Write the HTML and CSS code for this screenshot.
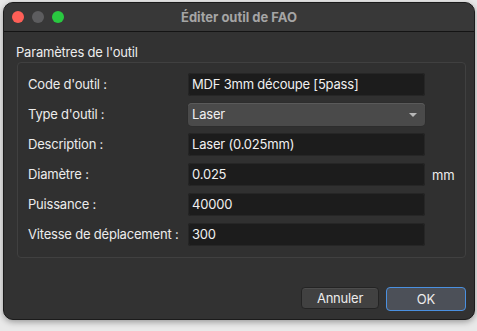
FILE: index.html
```html
<!DOCTYPE html>
<html lang="fr">
<head>
  <meta charset="UTF-8" />
  <title>Éditer outil de FAO</title>
  <link rel="stylesheet" href="styles.css">
</head>
<body>

  <div class="window">
    <div class="titlebar">
      <div class="lights">
        <span class="light red"></span>
        <span class="light grey"></span>
        <span class="light green"></span>
      </div>
      <div class="title">Éditer outil de FAO</div>
    </div>

    <div class="body">
      <div class="group-title">Paramètres de l'outil</div>
      <div class="group">
        <div class="form">
          <label>Code d'outil :</label>
          <div class="field">MDF 3mm découpe [5pass]</div>
          <span></span>

          <label>Type d'outil :</label>
          <div class="select">Laser <span class="arrow"></span></div>
          <span></span>

          <label>Description :</label>
          <div class="field">Laser (0.025mm)</div>
          <span></span>

          <label>Diamètre :</label>
          <div class="field">0.025</div>
          <span class="unit">mm</span>

          <label>Puissance :</label>
          <div class="field">40000</div>
          <span></span>

          <label>Vitesse de déplacement :</label>
          <div class="field">300</div>
          <span></span>
        </div>
      </div>

      <div class="buttons">
        <button class="btn">Annuler</button>
        <button class="btn default">OK</button>
      </div>
    </div>
  </div>

</body>
</html>
```

FILE: styles.css
```css
body {
  margin: 0;
  width: 477px;
  height: 331px;
  font-family: Inter, "Noto Sans", sans-serif;
  font-size: 13px;
  letter-spacing: -0.2px;
  color: #ececec;
  background-color: #e9e9e9;
  background-image:
    radial-gradient(circle, #c4c4c4 0.8px, transparent 1px);
  background-size: 30px 30px;
  overflow: hidden;
}

.window {
  margin: 2px 0 0 3px;
  width: 470px;
  height: 316px;
  border: 1px solid #1b1b1b;
  border-radius: 10px;
  background-color: #323232;
  box-shadow: 0 2px 6px rgba(0,0,0,0.35);
  display: flex;
  flex-direction: column;
  overflow: hidden;
}

.titlebar {
  height: 28px;
  background-color: #383838;
  border-bottom: 1px solid #141414;
  display: flex;
  align-items: center;
  position: relative;
}

.lights {
  display: flex;
  gap: 8px;
  padding-left: 8px;
}

.light {
  width: 12px;
  height: 12px;
  border-radius: 50%;
}

.red { background-color: #fe5f57; }
.grey { background-color: #5d5d5f; }
.green { background-color: #29c840; }

.title {
  position: absolute;
  left: 0;
  right: 0;
  text-align: center;
  font-weight: 700;
  letter-spacing: 0;
  color: #a5a5a5;
  pointer-events: none;
}

.body {
  flex: 1;
  display: flex;
  flex-direction: column;
  padding: 12px 8px 8px 12px;
}

.group-title {
  line-height: 16px;
  margin-bottom: 2px;
}

.group {
  margin-left: 1px;
  border: 1px solid #404040;
  border-radius: 4px;
  background-color: #303030;
  padding: 10px 10px 11px 10px;
}

.form {
  display: grid;
  grid-template-columns: 160px 237px auto;
  row-gap: 7px;
  align-items: center;
}

.form label {
  line-height: 23px;
}

.field {
  height: 23px;
  line-height: 23px;
  padding: 0 4px;
  box-sizing: border-box;
  background-color: #1c1c1c;
  border-radius: 3px;
  box-shadow: inset 0 0 0 1px #262626;
  color: #f0f0f0;
}

.select {
  height: 23px;
  line-height: 23px;
  padding: 0 4px;
  box-sizing: border-box;
  background-color: #4a4a4a;
  border-radius: 4px;
  box-shadow: inset 0 1px 0 #5a5a5a, 0 0 0 0.5px #2a2a2a;
  color: #f0f0f0;
  position: relative;
}

.arrow {
  position: absolute;
  right: 8px;
  top: 10px;
  border-left: 4px solid transparent;
  border-right: 4px solid transparent;
  border-top: 4px solid #b8b8b8;
}

.unit {
  padding-left: 7px;
}

.buttons {
  margin-top: auto;
  display: flex;
  justify-content: flex-end;
  gap: 7px;
}

.btn {
  font-family: inherit;
  font-size: 13px;
  letter-spacing: -0.2px;
  color: #ececec;
  height: 22px;
  width: 78px;
  padding: 0;
  background-color: #414141;
  border: 1px solid #242424;
  border-radius: 4px;
  box-shadow: inset 0 1px 0 #4d4d4d;
}

.btn.default {
  width: 80px;
  height: 24px;
  background-color: #4c5058;
  border: 1px solid #4a90e0;
  box-shadow: none;
}
```
